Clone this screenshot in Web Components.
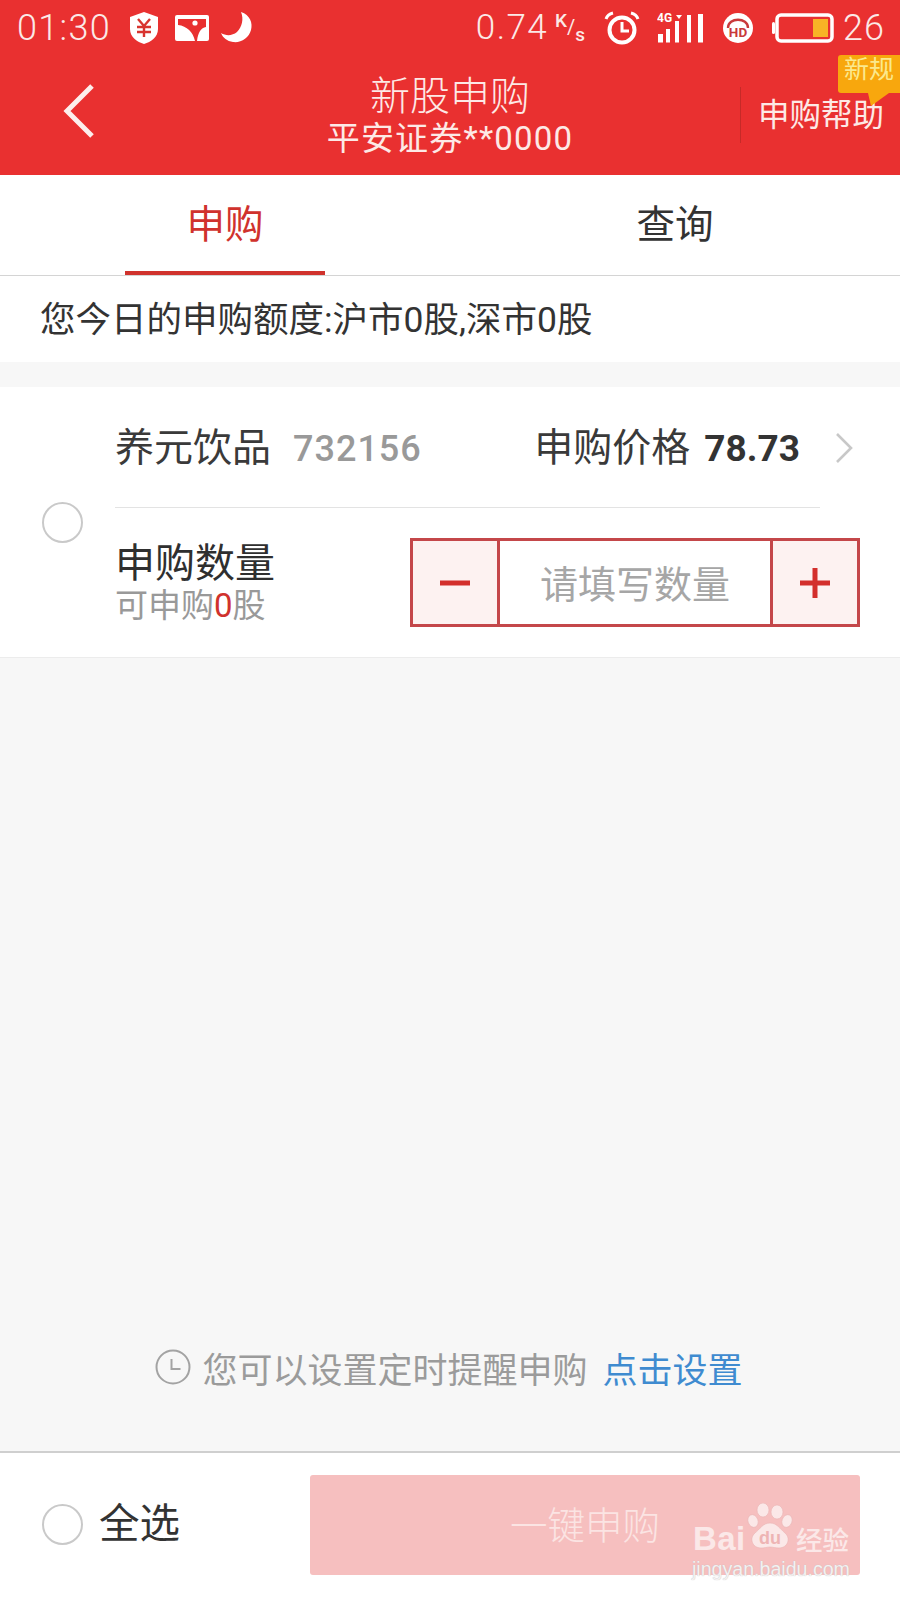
<!DOCTYPE html>
<html lang="zh">
<head>
<meta charset="utf-8">
<title>新股申购</title>
<style>
  html, body { margin: 0; padding: 0; }
  body {
    width: 900px;
    height: 1600px;
    overflow: hidden;
    background: #f7f7f7;
    font-family: "Roboto", "Noto Sans CJK SC", sans-serif;
    display: flex;
    flex-direction: column;
    position: relative;
  }
  .spacer { flex: 1; }
</style>
</head>
<body>
  <status-bar></status-bar>
  <app-header title="新股申购" account="平安证券**0000"></app-header>
  <tab-bar></tab-bar>
  <quota-line>您今日的申购额度:沪市0股,深市0股</quota-line>
  <stock-card name="养元饮品" code="732156" price="78.73" available="0"></stock-card>
  <div class="spacer"></div>
  <remind-line></remind-line>
  <bottom-bar></bottom-bar>
  <site-mark></site-mark>

<script>
// Small helper so each element only declares its styles and markup
class ShadowEl extends HTMLElement {
  constructor() {
    super();
    this.attachShadow({ mode: 'open' });
  }
  connectedCallback() {
    this.shadowRoot.innerHTML = `<style>${this.styles()}</style>${this.markup()}`;
  }
  styles() { return ''; }
  markup() { return ''; }
}

class StatusBar extends ShadowEl {
  styles() {
    return `
      :host { display: flex; align-items: center; height: 55px; background: #e93030; color: #fbe9e7;
        padding: 0 15px 0 17px; box-sizing: border-box; font-family: Roboto, sans-serif; font-weight: 300; }
      .time { font-size: 36px; letter-spacing: 1.300px; width: 111px; }
      svg { display: block; flex: none; }
      .speed { font-size: 35px; letter-spacing: 1.400px; margin-left: auto; }
      .unit { display: flex; width: 30px; height: 30px; margin: 0 19px 0 7px; font-size: 19px; font-weight: 500; line-height: 16px; }
      .unit span:nth-child(2) { margin-top: 6px; font-weight: 400; font-size: 20px; }
      .unit span:nth-child(3) { margin-top: 14px; }
      .num { font-size: 36px; letter-spacing: 1px; margin-left: 9px; }
    `;
  }
  markup() {
    return `
      <span class="time">01:30</span>
      <svg width="32" height="34" viewBox="0 0 32 34"><path d="M16 1 30 6v12c0 8-7 13-14 15C9 31 2 26 2 18V6z" fill="#fff"/><path d="M10 8l6 7 6-7M9 16h14M9 21h14M16 15v11" fill="none" stroke="#d8342f" stroke-width="2.400"/></svg>
      <svg width="34" height="26" viewBox="0 0 34 26" style="margin-left:15px"><rect width="34" height="26" rx="2" fill="#fff"/><path d="M3 4h28v8c-5 1-8 5-9 14h-2c-2-9-8-15-17-16z" fill="#e93030"/><circle cx="20" cy="8" r="2.600" fill="#fff"/></svg>
      <svg width="33" height="33" viewBox="0 0 33 33" style="margin-left:11px"><path d="M21 1c9 3 12 11 10 18-2 8-10 13-18 12C7 30 3 27 1 22c5 3 11 3 16-1 5-5 7-13 4-20z" fill="#fff"/></svg>
      <span class="speed">0.74</span>
      <span class="unit"><span>K</span><span>/</span><span>s</span></span>
      <svg width="36" height="34" viewBox="0 0 36 34"><circle cx="18" cy="19" r="12.500" fill="none" stroke="#fff" stroke-width="4"/><path d="M18 11v9h7" fill="none" stroke="#fff" stroke-width="3"/><path d="M2 8c1-3 3-5 7-6M34 8c-1-3-3-5-7-6" fill="none" stroke="#fff" stroke-width="3"/></svg>
      <svg width="48" height="32" viewBox="0 0 48 32" style="margin-left:17px"><text x="0" y="10" font-family="Roboto" font-size="12" font-weight="700" fill="#fff">4G</text><path d="M19 3h6l-3 4z" fill="#fff"/><rect x="1" y="22" width="5" height="8.500" fill="#fff"/><rect x="9" y="17" width="4" height="13.500" fill="#fff"/><rect x="18" y="9" width="4" height="21.500" fill="#fff"/><rect x="30" y="3" width="4" height="27.500" fill="#fff"/><rect x="41" y="2" width="5" height="28.500" fill="#fff"/></svg>
      <svg width="30" height="30" viewBox="0 0 30 30" style="margin-left:18px"><circle cx="15" cy="15" r="15" fill="#fff"/><path d="M5 15c0-11 20-11 20 0" fill="none" stroke="#c9393b" stroke-width="2.400"/><text x="15" y="24" text-anchor="middle" font-family="Roboto" font-size="13.500" font-weight="700" fill="#c9393b">HD</text></svg>
      <svg width="62" height="30" viewBox="0 0 62 30" style="margin-left:19px"><rect x="0" y="9" width="3" height="12" rx="1.500" fill="#fff"/><rect x="5" y="2" width="55" height="26" rx="4" fill="none" stroke="#fff" stroke-width="3.500"/><rect x="41" y="6" width="15" height="18" fill="#f8b326"/></svg>
      <span class="num">26</span>
    `;
  }
}

class AppHeader extends ShadowEl {
  styles() {
    return `
      :host { display: grid; grid-template-columns: 160px 580px 160px; height: 120px; background: #e93030; color: #fde9e6;
        font-family: "Noto Sans CJK SC", sans-serif; position: relative; }
      .back { display: flex; align-items: center; padding: 0 0 9px 62px; }
      .mid { display: flex; flex-direction: column; align-items: center; padding-top: 13px; }
      .title { font-size: 40px; line-height: 51px; font-weight: 300; }
      .sub { font-size: 33px; line-height: 40px; letter-spacing: 1.200px; font-weight: 400; white-space: nowrap; font-family: Roboto, "Noto Sans CJK SC", sans-serif; }
      .help { display: flex; align-items: center; margin: 32px 0; height: 56px; box-sizing: border-box; border-left: 1px solid #c62a28;
        padding: 0 0 6px 17px; font-size: 31.500px; white-space: nowrap; font-weight: 400; }
      .badge { position: absolute; right: 0; top: 0; width: 62px; height: 38px; background: #f8a70d; border-radius: 3px 0 0 3px;
        color: #fbe98d; font-size: 25px; line-height: 25px; text-align: center; white-space: nowrap; }
      .badge::after { content: ""; position: absolute; left: 30px; top: 38px; border-top: 13px solid #f8a70d; border-left: 3px solid transparent; border-right: 18px solid transparent; }
    `;
  }
  markup() {
    return `
      <div class="back"><svg width="34" height="56" viewBox="0 0 34 56"><path d="M30 3 5 28l25 25" fill="none" stroke="#fdeeec" stroke-width="5"/></svg></div>
      <div class="mid"><span class="title">${this.getAttribute('title')}</span><span class="sub">${this.getAttribute('account')}</span></div>
      <div class="help">申购帮助</div>
      <div class="badge">新规</div>
    `;
  }
}

class TabBar extends ShadowEl {
  styles() {
    return `
      :host { display: grid; grid-template-columns: 1fr 1fr; height: 101px; background: #fff; border-bottom: 1px solid #d4d4d4;
        box-sizing: border-box; font-family: "Noto Sans CJK SC", sans-serif; font-size: 38.500px; color: #333; }
      .tab { display: flex; justify-content: center; align-items: center; position: relative; padding-bottom: 8px; }
      .on { color: #d0322d; }
      .on::after { content: ""; position: absolute; left: 125px; width: 200px; bottom: 0; height: 4px; background: #d0322d; }
    `;
  }
  markup() {
    return `<div class="tab on">申购</div><div class="tab">查询</div>`;
  }
}

class QuotaLine extends ShadowEl {
  styles() {
    return `
      :host { display: flex; align-items: center; height: 86px; padding: 0 0 6px 40px; box-sizing: border-box; background: #fff;
        font-family: Roboto, "Noto Sans CJK SC", sans-serif; font-size: 35.500px; color: #333; margin-bottom: 25px; white-space: nowrap; }
    `;
  }
  markup() { return `<slot></slot>`; }
}

class RoundCheck extends ShadowEl {
  styles() {
    return `:host { display: block; width: 41px; height: 41px; box-sizing: border-box; border: 2px solid #c9c9c9; border-radius: 50%; background: #fff; flex: none; }`;
  }
}

class QtyStepper extends ShadowEl {
  styles() {
    return `
      :host { display: grid; grid-template-columns: 84px 1fr 84px; width: 450px; height: 89px; box-sizing: border-box; flex: none;
        border: 3px solid #c4474a; background: #fff; font-family: "Noto Sans CJK SC", sans-serif; }
      .btn { background: #fdf2f1; display: flex; align-items: center; justify-content: center; }
      .field { display: flex; align-items: center; justify-content: center; border-left: 3px solid #c4474a; border-right: 3px solid #c4474a;
        color: #a6a6a6; font-size: 38px; padding-bottom: 2px; }
    `;
  }
  markup() {
    return `
      <div class="btn"><svg width="32" height="32" viewBox="0 0 32 32"><path d="M1 16h30" stroke="#d32f2c" stroke-width="5"/></svg></div>
      <div class="field">请填写数量</div>
      <div class="btn"><svg width="32" height="32" viewBox="0 0 32 32"><path d="M1 16h30M16 1v30" stroke="#d32f2c" stroke-width="5"/></svg></div>
    `;
  }
}

class StockCard extends ShadowEl {
  styles() {
    return `
      :host { display: grid; grid-template-columns: 115px 1fr; height: 271px; background: #fff; border-bottom: 1px solid #ececec;
        box-sizing: border-box; font-family: Roboto, "Noto Sans CJK SC", sans-serif; }
      .check { display: flex; padding: 115px 0 0 42px; }
      .top { display: flex; align-items: baseline; height: 120px; width: 745px; padding-top: 37.500px; box-sizing: border-box;
        color: #3a3a3a; font-size: 39px; line-height: 46px; white-space: nowrap; }
      .code { color: #999; font-weight: 500; font-size: 36px; letter-spacing: 1px; margin-left: 22px; }
      .price { margin-left: auto; }
      .price b { font-weight: 700; font-size: 37px; margin-left: 14px; color: #333; }
      .go { flex: none; align-self: flex-start; margin: 7px 5px 0 35px; }
      .rule { width: 705px; height: 1px; background: #e3e3e3; }
      .bottom { display: flex; align-items: flex-start; justify-content: space-between; width: 745px; padding-top: 30px; }
      .qty { display: flex; flex-direction: column; margin-top: 3px; }
      .qty .label { font-size: 40px; line-height: 45px; color: #2f2f2f; }
      .qty .left { font-size: 33px; line-height: 39px; color: #999; white-space: nowrap; }
      .qty em { font-style: normal; color: #d0322d; }
    `;
  }
  markup() {
    const a = (n) => this.getAttribute(n);
    return `
      <div class="check"><round-check></round-check></div>
      <div class="body">
        <div class="top">
          <span>${a('name')}</span><span class="code">${a('code')}</span>
          <span class="price">申购价格<b>${a('price')}</b></span>
          <svg class="go" width="20" height="32" viewBox="0 0 20 32"><path d="M2 2l14 14L2 30" fill="none" stroke="#c8c8c8" stroke-width="2.600"/></svg>
        </div>
        <div class="rule"></div>
        <div class="bottom">
          <div class="qty">
            <span class="label">申购数量</span>
            <span class="left">可申购<em>${a('available')}</em>股</span>
          </div>
          <qty-stepper></qty-stepper>
        </div>
      </div>
    `;
  }
}

class RemindLine extends ShadowEl {
  styles() {
    return `
      :host { display: flex; align-items: center; justify-content: center; height: 44px; margin-bottom: 62px; padding-right: 2px;
        font-family: "Noto Sans CJK SC", sans-serif; font-size: 35px; color: #9b9b9b; white-space: nowrap; }
      svg { margin-right: 11px; flex: none; }
      a { color: #3f8bd0; margin-left: 15px; font-size: 35px; text-decoration: none; }
    `;
  }
  markup() {
    return `
      <svg width="36" height="36" viewBox="0 0 36 36"><circle cx="18" cy="18" r="16.500" fill="none" stroke="#a3a3a3" stroke-width="2"/><path d="M16.500 10v10h9" fill="none" stroke="#a3a3a3" stroke-width="2"/></svg>
      <span>您可以设置定时提醒申购</span><a>点击设置</a>
    `;
  }
}

class BottomBar extends ShadowEl {
  styles() {
    return `
      :host { display: flex; align-items: center; height: 149px; box-sizing: border-box; border-top: 2px solid #cfcfcf; background: #fff;
        padding: 0 40px 4px 42px; font-family: "Noto Sans CJK SC", sans-serif; }
      .all { font-size: 40.500px; color: #333; margin-left: 16px; padding-bottom: 8px; }
      .submit { margin-left: auto; width: 550px; height: 100px; box-sizing: border-box; padding-bottom: 4px; border-radius: 3px; background: #f6bfbf; color: #fbe4e3;
        display: flex; align-items: center; justify-content: center; font-size: 37.500px; font-weight: 300; }
    `;
  }
  markup() {
    return `<round-check></round-check><span class="all">全选</span><div class="submit">一键申购</div>`;
  }
}

// Photo-site stamp sitting over the bottom right corner
class SiteMark extends ShadowEl {
  styles() {
    return `
      :host { display: block; position: absolute; left: 686px; top: 1500px; width: 170px; height: 84px; color: #fbe8e8;
        font-family: "Liberation Sans", sans-serif; }
      .bai { position: absolute; left: 7px; top: 19px; font-size: 33px; line-height: 40px; font-weight: 700; letter-spacing: .4px; }
      .jy { position: absolute; left: 110px; top: 22px; font-size: 26.500px; line-height: 34px; font-family: "Noto Sans CJK SC", sans-serif; font-weight: 500; }
      .url { position: absolute; left: 6px; top: 57px; font-size: 19.600px; line-height: 24px; color: #f4f1f1; text-shadow: 0 0 1px #b9b9b9; white-space: nowrap; }
      svg { position: absolute; left: 59px; top: 3px; }
    `;
  }
  markup() {
    return `
      <span class="bai">Bai</span>
      <svg width="50" height="47" viewBox="0 0 50 47">
        <g fill="#fbe8e8" stroke="#e9b3b3" stroke-width=".6">
          <ellipse cx="18" cy="7" rx="6" ry="7"/><ellipse cx="32" cy="9" rx="6" ry="7"/>
          <ellipse cx="8" cy="18" rx="5" ry="6.500" transform="rotate(-20 8 18)"/><ellipse cx="42" cy="18" rx="5" ry="6.500" transform="rotate(20 42 18)"/>
          <path d="M25 20c7 0 10 6 15 10 6 5 3 15-6 15-4 0-6-1-9-1s-5 1-9 1c-9 0-12-10-6-15 5-4 8-10 15-10z"/>
        </g>
        <text x="25" y="41" text-anchor="middle" font-family="Liberation Sans" font-size="18" font-weight="700" fill="#eeb4b4">du</text>
      </svg>
      <span class="jy">经验</span>
      <span class="url">jingyan.baidu.com</span>
    `;
  }
}

customElements.define('status-bar', StatusBar);
customElements.define('app-header', AppHeader);
customElements.define('tab-bar', TabBar);
customElements.define('quota-line', QuotaLine);
customElements.define('round-check', RoundCheck);
customElements.define('qty-stepper', QtyStepper);
customElements.define('stock-card', StockCard);
customElements.define('remind-line', RemindLine);
customElements.define('bottom-bar', BottomBar);
customElements.define('site-mark', SiteMark);
</script>
</body>
</html>
